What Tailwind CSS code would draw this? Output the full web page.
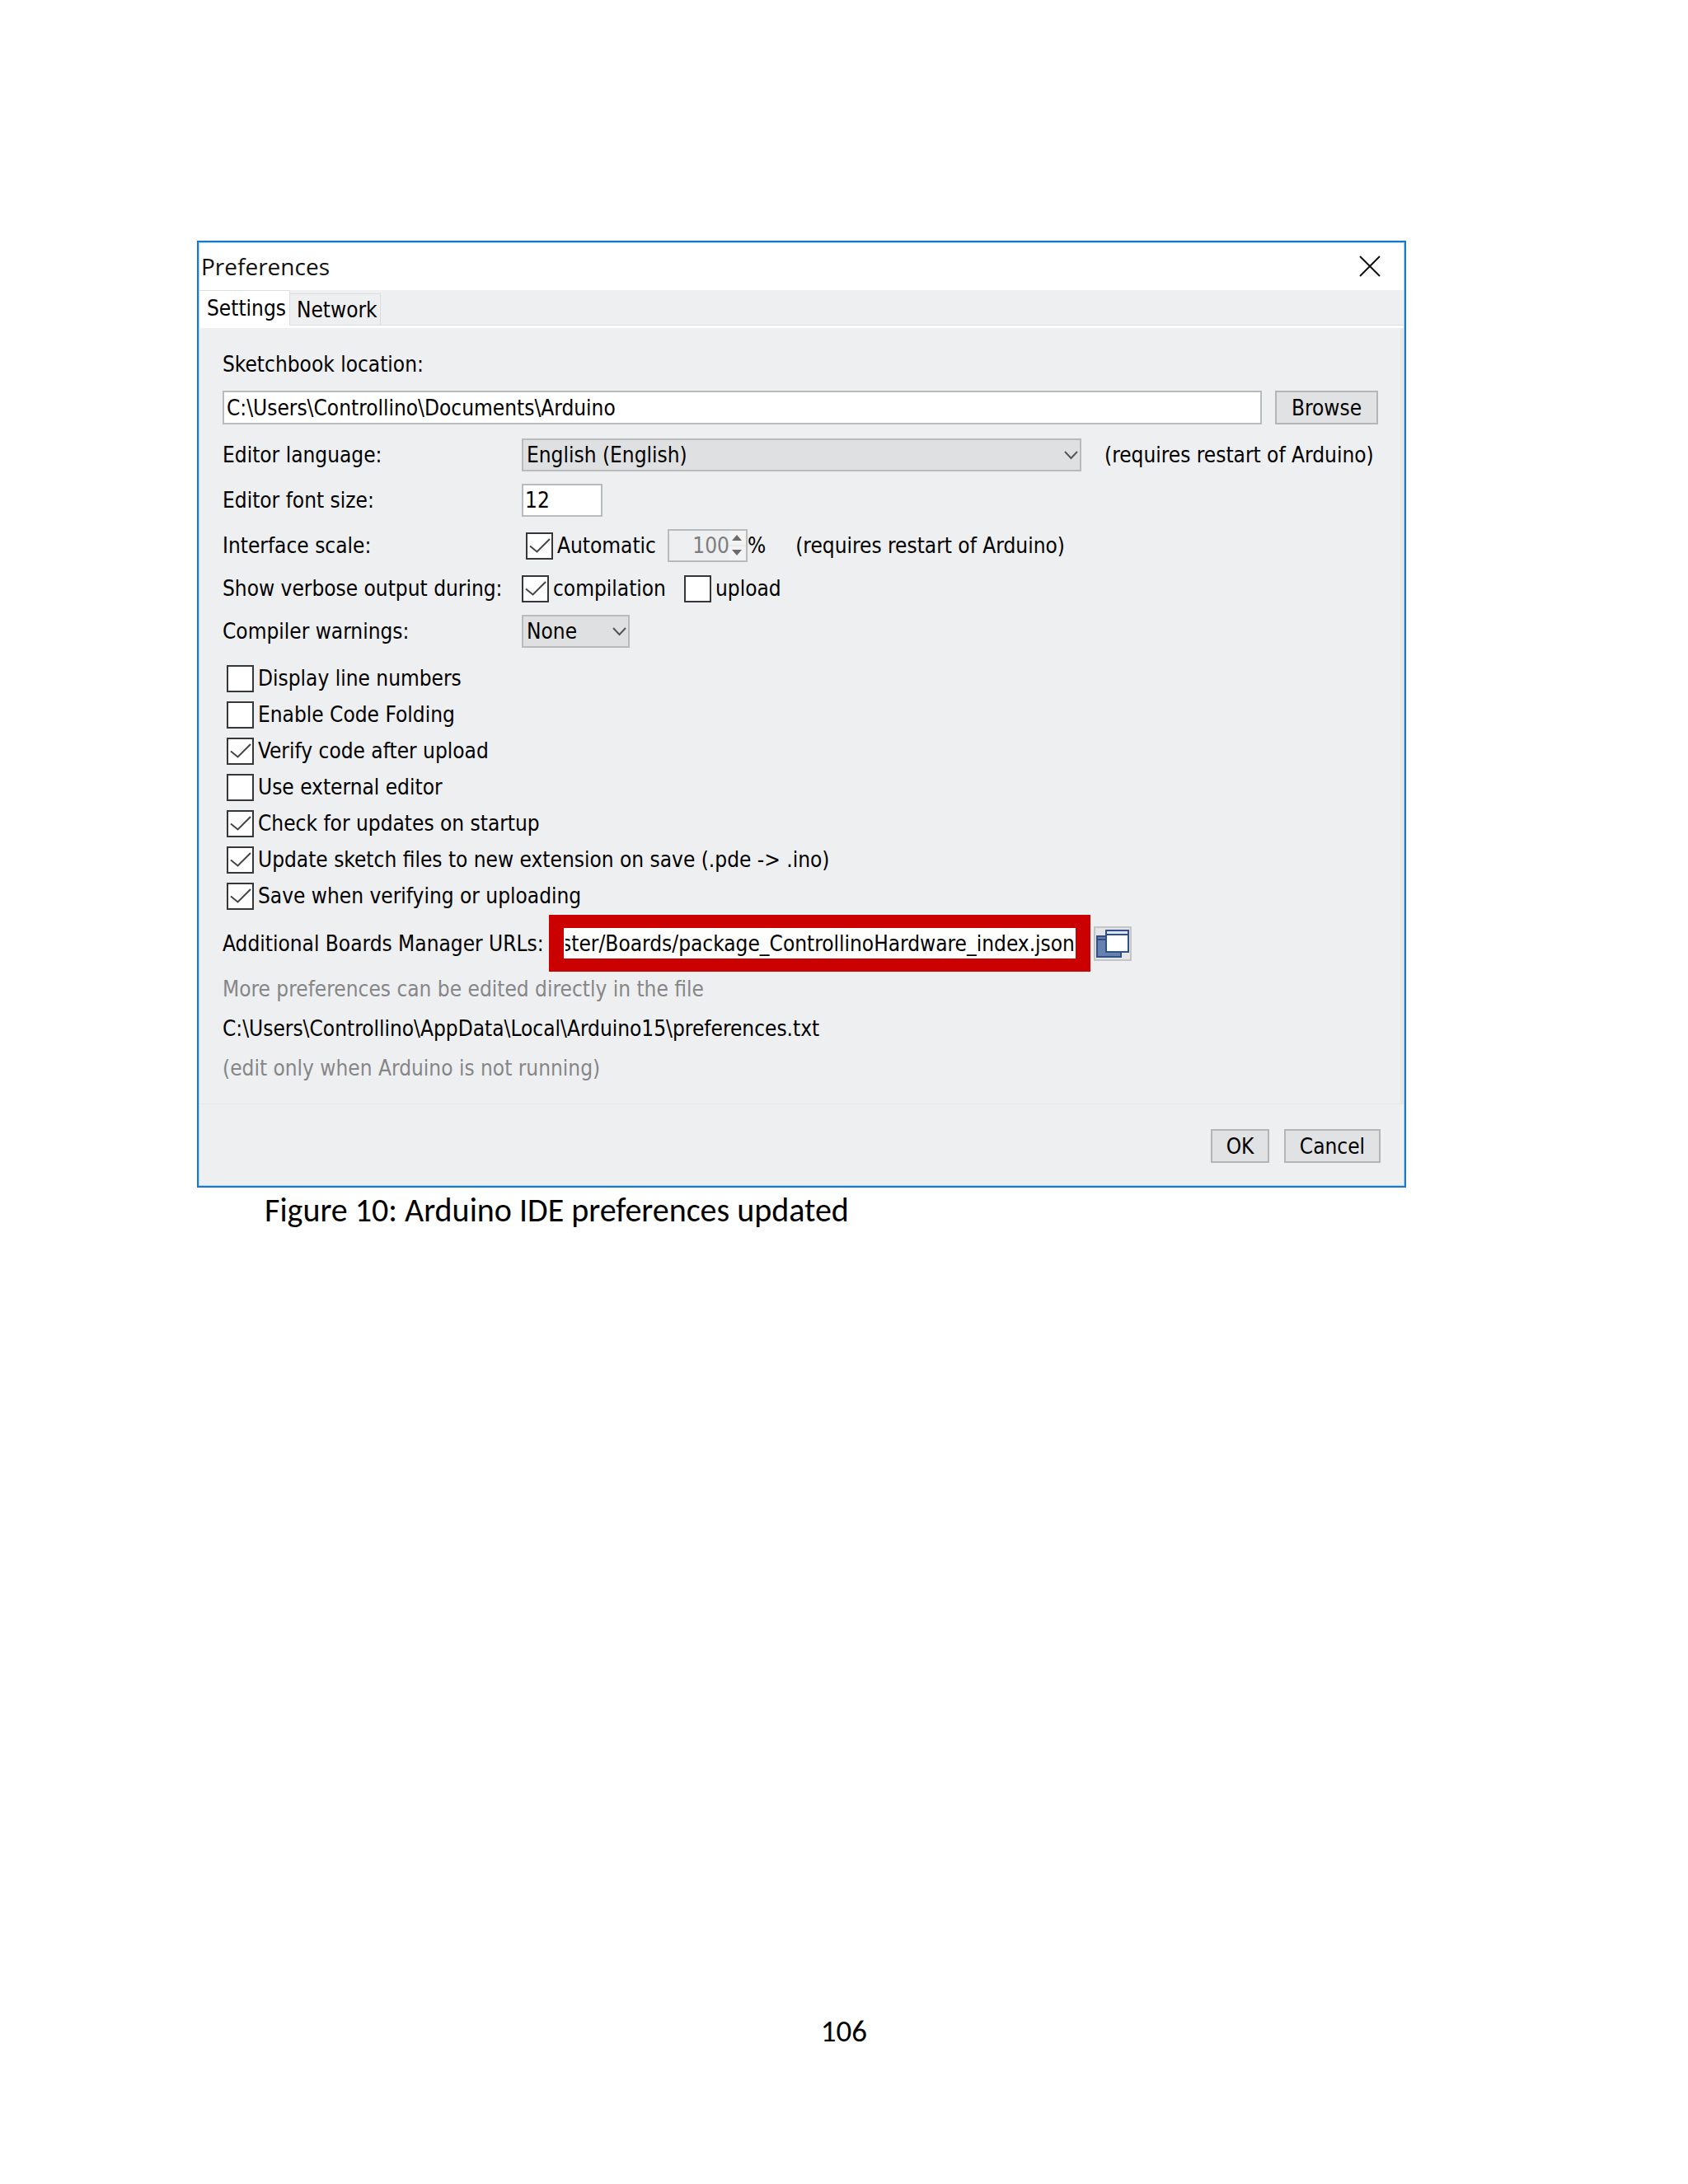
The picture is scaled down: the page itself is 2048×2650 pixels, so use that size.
<!DOCTYPE html>
<html lang="en">
<head>
    <meta charset="UTF-8">
    <meta name="viewport" content="width=device-width, initial-scale=1.0">
    <title>Arduino IDE preferences</title>
    <script src="https://cdn.jsdelivr.net/npm/@tailwindcss/browser@4"></script>
</head>
<body class="bg-white text-black min-h-screen flex flex-col">

    <main class="pt-[292px] pl-[239px] pr-[342px]">
        <figure>
            <!-- Preferences window -->
            <section class="border-2 border-[#1a78c8] bg-[#a8d4f6] p-px font-['DejaVu_Sans_Condensed','DejaVu_Sans',sans-serif] text-[26px] leading-8">

                <header class="flex items-center justify-between bg-white h-[57px] pl-[2px] pr-7 pb-[2px]">
                    <h1 class="font-['Open_Sans','Noto_Sans',sans-serif] text-[28px] text-[#111]">Preferences</h1>
                    <button type="button" aria-label="Close">
                        <svg class="w-[26px] h-[26px]" viewBox="0 0 26 26" fill="none" stroke="#111" stroke-width="2"><path d="M1 1l24 24M25 1L1 25"/></svg>
                    </button>
                </header>

                <nav class="flex items-end bg-[#eeeff1] border-b-3 border-white" aria-label="Preference tabs">
                    <button type="button" class="bg-white border-t border-r border-[#dcdddd] h-[43px] pl-[9px] pr-1">Settings</button>
                    <button type="button" class="border-t border-r border-b border-[#dcdddd] h-[39px] pl-2 pr-[3px]">Network</button>
                    <div class="flex-1 border-b border-[#dcdddd]"></div>
                </nav>

                <form>
                    <div class="bg-[#eeeff1] border-r-4 border-b border-[#e8e8e7] pl-7 pr-[27px] pt-7 pb-[27px]">
                        <label for="sketchbook" class="block">Sketchbook location:</label>
                        <div class="flex items-center gap-4 mt-4">
                            <input id="sketchbook" type="text" value="C:\Users\Controllino\Documents\Arduino" class="flex-1 min-w-0 h-[41px] bg-white border-2 border-[#b9babc] pl-[3px]">
                            <button type="button" class="w-[125px] h-[41px] bg-[#e1e2e4] border-2 border-[#b4b5b7]">Browse</button>
                        </div>

                        <div class="grid grid-cols-[363px_1fr] items-center gap-y-[15px] mt-[17px]">
                            <label for="language">Editor language:</label>
                            <div class="flex items-center gap-7">
                                <div class="relative flex-1">
                                    <select id="language" class="block w-full h-10 appearance-none bg-[#dfe0e2] border-2 border-[#b9babc] pl-1">
                                        <option>English (English)</option>
                                    </select>
                                    <svg class="absolute right-1 top-[15px] w-[17px] h-[11px] pointer-events-none" viewBox="0 0 17 11" fill="none" stroke="#555" stroke-width="2"><path d="M1 1l7.500 8L16 1"/></svg>
                                </div>
                                <span class="w-[332px]">(requires restart of Arduino)</span>
                            </div>

                            <label for="fontsize">Editor font size:</label>
                            <div class="flex">
                                <input id="fontsize" type="text" value="12" class="w-[98px] h-10 bg-white border-2 border-[#b9babc] pl-[2px]">
                            </div>

                            <span>Interface scale:</span>
                            <div class="flex items-center pl-[5px]">
                                <label class="relative flex items-center gap-[5px] w-[172px]">
                                    <input type="checkbox" checked class="peer appearance-none w-[33px] h-[33px] bg-white border-2 border-[#37373a]">
                                    <svg class="hidden peer-checked:block absolute left-0 w-[33px] h-[33px]" viewBox="0 0 33 33" fill="none" stroke="#444" stroke-width="2"><path d="M5 16.500l8.500 7L29 8"/></svg>
                                    Automatic
                                </label>
                                <div class="relative">
                                    <input id="scale" type="text" value="100" disabled aria-label="Scale in percent" class="block w-[97px] h-10 bg-[#eeeff1] border-2 border-[#b9babc] pr-5 text-right text-[#7d7d7f]">
                                    <svg class="absolute right-[2px] top-[2px] w-[20px] h-9" viewBox="0 0 20 36"><path d="M0 0h20v36H0z" fill="#f3f3f4"/><path d="M0 18h20" stroke="#dedfe0"/><path d="M3 12l6-7 6 7zM3 23l6 7 6-7z" fill="#6b6b6d"/></svg>
                                </div>
                                <label for="scale">%</label>
                                <span class="ml-9">(requires restart of Arduino)</span>
                            </div>

                            <span>Show verbose output during:</span>
                            <div class="flex items-center h-[34px]">
                                <label class="relative flex items-center gap-[5px] w-[197px]">
                                    <input type="checkbox" checked class="peer appearance-none w-[33px] h-[33px] bg-white border-2 border-[#37373a]">
                                    <svg class="hidden peer-checked:block absolute left-0 w-[33px] h-[33px]" viewBox="0 0 33 33" fill="none" stroke="#444" stroke-width="2"><path d="M5 16.500l8.500 7L29 8"/></svg>
                                    compilation
                                </label>
                                <label class="flex items-center gap-[5px]">
                                    <input type="checkbox" class="appearance-none w-[33px] h-[33px] bg-white border-2 border-[#37373a]">
                                    upload
                                </label>
                            </div>

                            <label for="warnings">Compiler warnings:</label>
                            <div class="relative w-[131px]">
                                <select id="warnings" class="block w-full h-10 appearance-none bg-[#dfe0e2] border-2 border-[#b9babc] pl-1">
                                    <option>None</option>
                                </select>
                                <svg class="absolute right-1 top-[15px] w-[17px] h-[11px] pointer-events-none" viewBox="0 0 17 11" fill="none" stroke="#555" stroke-width="2"><path d="M1 1l7.500 8L16 1"/></svg>
                            </div>
                        </div>

                        <div class="mt-[15px] pl-[5px]">
                            <label class="flex items-center gap-[5px] h-11">
                                <input type="checkbox" class="appearance-none w-[33px] h-[33px] bg-white border-2 border-[#37373a]">
                                Display line numbers
                            </label>
                            <label class="flex items-center gap-[5px] h-11">
                                <input type="checkbox" class="appearance-none w-[33px] h-[33px] bg-white border-2 border-[#37373a]">
                                Enable Code Folding
                            </label>
                            <label class="relative flex items-center gap-[5px] h-11">
                                <input type="checkbox" checked class="peer appearance-none w-[33px] h-[33px] bg-white border-2 border-[#37373a]">
                                <svg class="hidden peer-checked:block absolute left-0 w-[33px] h-[33px]" viewBox="0 0 33 33" fill="none" stroke="#444" stroke-width="2"><path d="M5 16.500l8.500 7L29 8"/></svg>
                                Verify code after upload
                            </label>
                            <label class="flex items-center gap-[5px] h-11">
                                <input type="checkbox" class="appearance-none w-[33px] h-[33px] bg-white border-2 border-[#37373a]">
                                Use external editor
                            </label>
                            <label class="relative flex items-center gap-[5px] h-11">
                                <input type="checkbox" checked class="peer appearance-none w-[33px] h-[33px] bg-white border-2 border-[#37373a]">
                                <svg class="hidden peer-checked:block absolute left-0 w-[33px] h-[33px]" viewBox="0 0 33 33" fill="none" stroke="#444" stroke-width="2"><path d="M5 16.500l8.500 7L29 8"/></svg>
                                Check for updates on startup
                            </label>
                            <label class="relative flex items-center gap-[5px] h-11">
                                <input type="checkbox" checked class="peer appearance-none w-[33px] h-[33px] bg-white border-2 border-[#37373a]">
                                <svg class="hidden peer-checked:block absolute left-0 w-[33px] h-[33px]" viewBox="0 0 33 33" fill="none" stroke="#444" stroke-width="2"><path d="M5 16.500l8.500 7L29 8"/></svg>
                                Update sketch files to new extension on save (.pde -&gt; .ino)
                            </label>
                            <label class="relative flex items-center gap-[5px] h-11">
                                <input type="checkbox" checked class="peer appearance-none w-[33px] h-[33px] bg-white border-2 border-[#37373a]">
                                <svg class="hidden peer-checked:block absolute left-0 w-[33px] h-[33px]" viewBox="0 0 33 33" fill="none" stroke="#444" stroke-width="2"><path d="M5 16.500l8.500 7L29 8"/></svg>
                                Save when verifying or uploading
                            </label>
                        </div>

                        <div class="flex items-center mt-px">
                            <label for="urls" class="w-[396px]">Additional Boards Manager URLs:</label>
                            <input id="urls" type="text" value="master/Boards/package_ControllinoHardware_index.json" class="w-[657px] h-[69px] bg-white border-x-[18px] border-y-16 border-[#cb0000] pl-[2px] pr-px">
                            <button type="button" aria-label="Edit URLs" class="ml-1 w-[46px] h-[42px] bg-[#e4e5e7] border-2 border-[#c4c5c6] flex items-center justify-center">
                                <svg class="w-[40px] h-[36px]" viewBox="0 0 40 36"><path d="M1 9h29v25H1z" fill="#6680b0" stroke="#2f4f86" stroke-width="2"/><path d="M1 13h29" stroke="#2f4f86" stroke-width="2"/><path d="M12 2h27v26H12z" fill="#fff" stroke="#2f4f86" stroke-width="2"/><path d="M13 3h25v4H13z" fill="#dfe3f3"/><path d="M12 7h27" stroke="#2f4f86" stroke-width="2"/></svg>
                            </button>
                        </div>

                        <div class="flex flex-col gap-4 mt-[5px]">
                            <p class="text-[#868688]">More preferences can be edited directly in the file</p>
                            <p>C:\Users\Controllino\AppData\Local\Arduino15\preferences.txt</p>
                            <p class="text-[#868688]">(edit only when Arduino is not running)</p>
                        </div>
                    </div>

                    <div class="bg-[#eeeff1] flex justify-end gap-[18px] pt-[30px] pr-7 pb-[27px]">
                        <button type="submit" class="w-[71px] h-[41px] bg-[#e1e2e4] border-2 border-[#b4b5b7]">OK</button>
                        <button type="button" class="w-[117px] h-[41px] bg-[#e1e2e4] border-2 border-[#b4b5b7]">Cancel</button>
                    </div>
                </form>
            </section>

            <figcaption class="font-['Carlito','Lato',sans-serif] text-[40px] leading-[48px] pl-[82px] mt-1">Figure 10: Arduino IDE preferences updated</figcaption>
        </figure>
    </main>

    <footer class="mt-auto pb-[163px] text-center font-['Carlito','Lato',sans-serif] text-[37px] leading-[44px]">106</footer>

    <script>
        // show the end of the long URL list
        const urls = document.getElementById('urls');
        urls.scrollLeft = urls.scrollWidth;
    </script>
</body>
</html>
